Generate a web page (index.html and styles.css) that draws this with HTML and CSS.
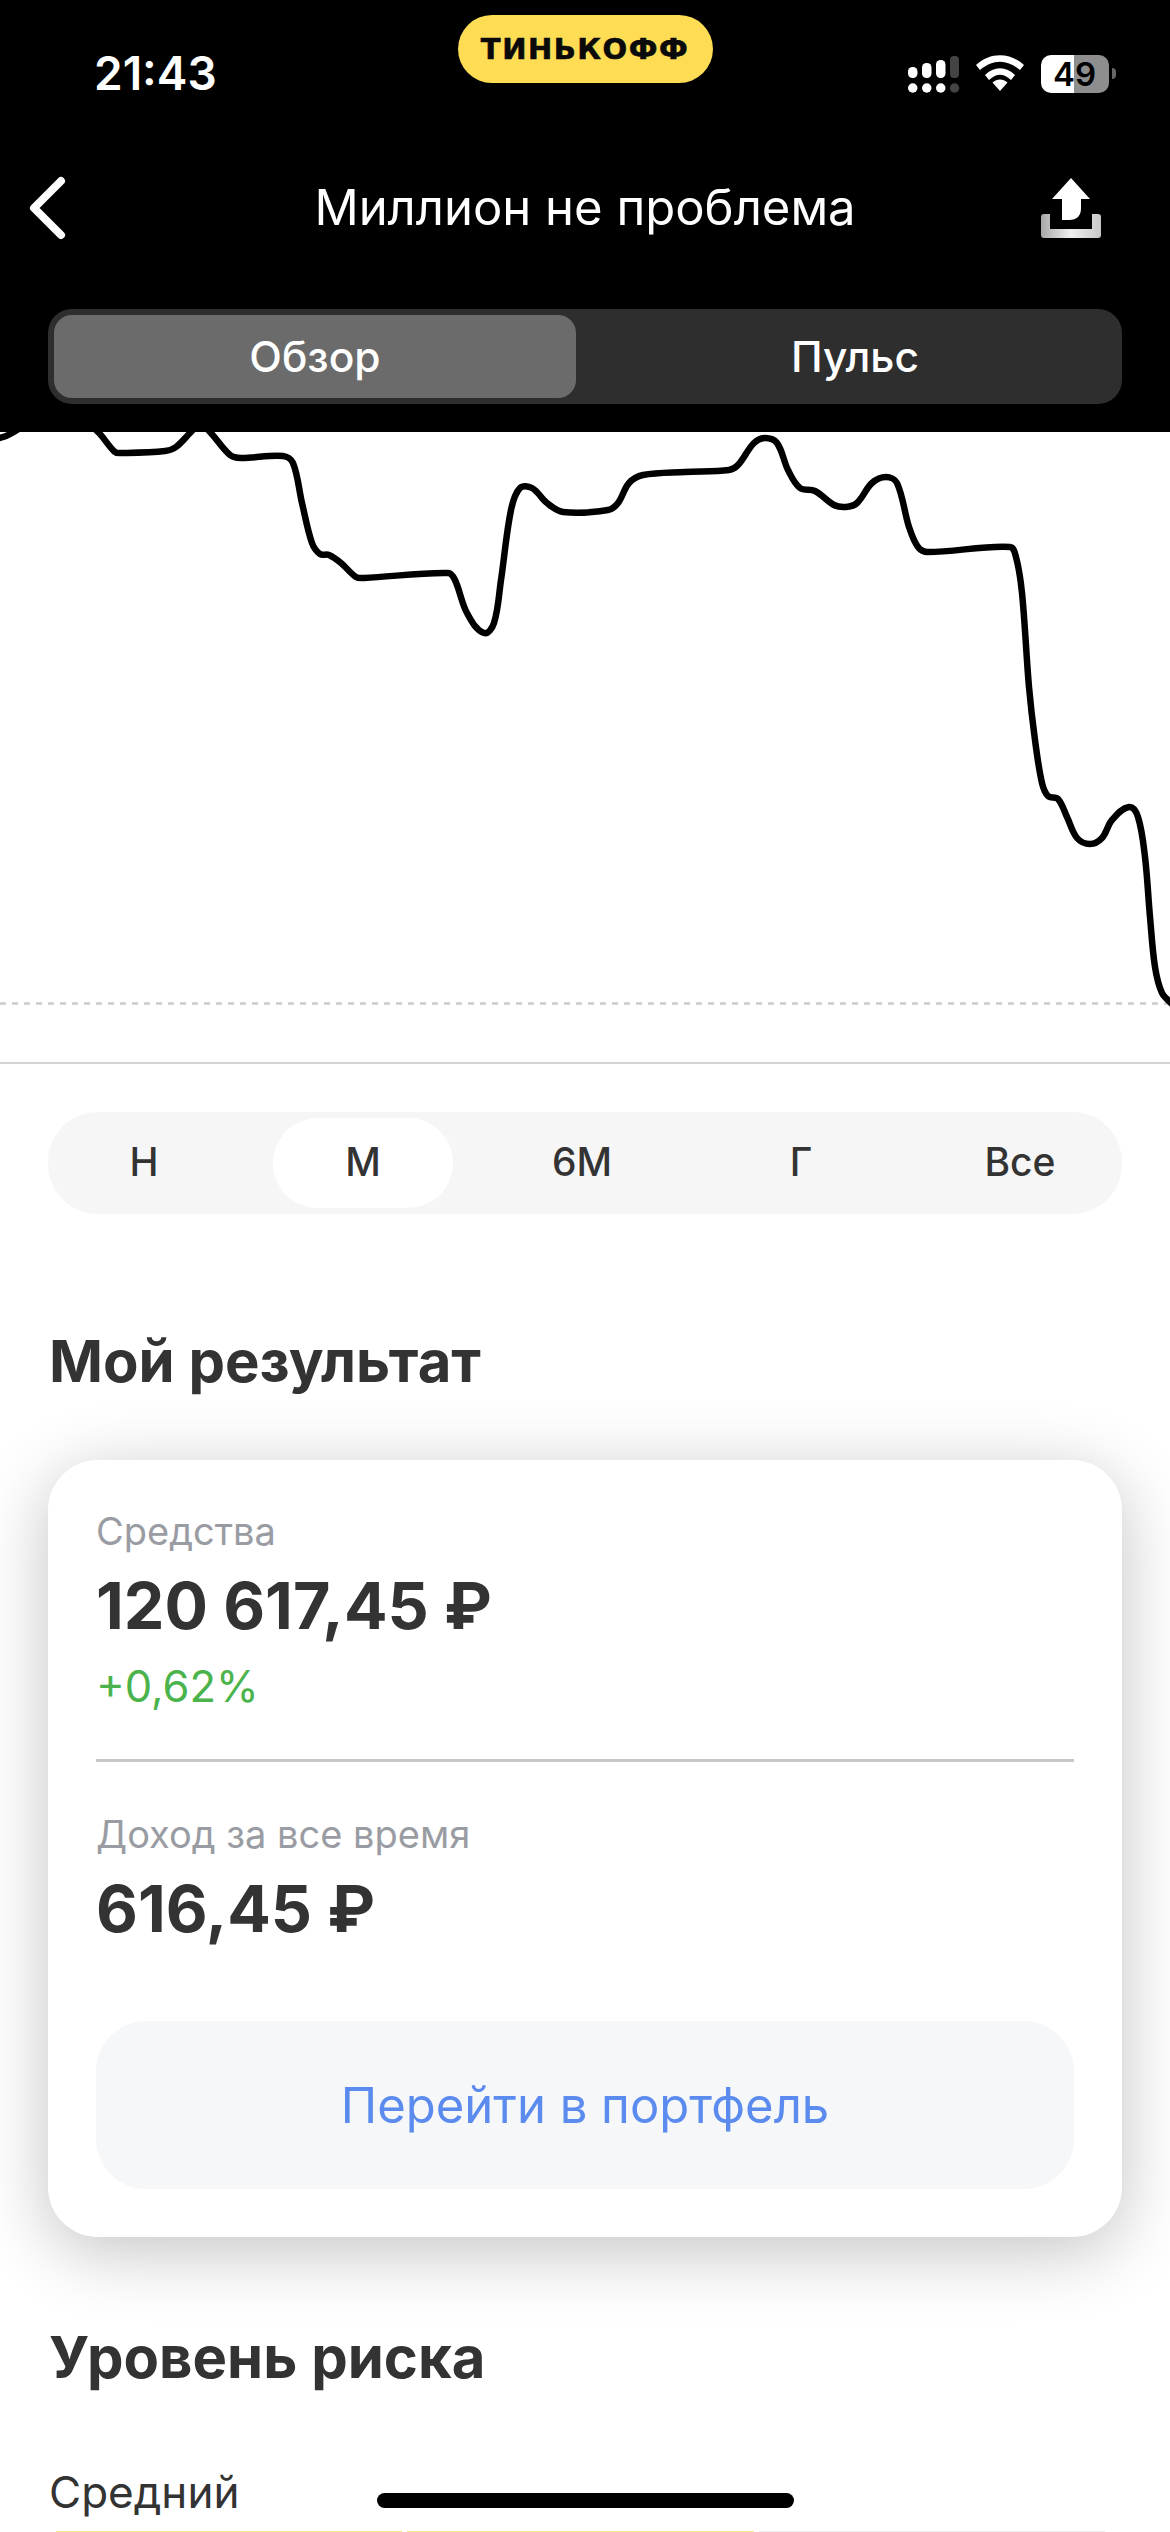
FILE: index.html
```html
<!DOCTYPE html>
<html lang="ru">
<head>
    <meta charset="UTF-8">
    <meta name="viewport" content="width=device-width, initial-scale=1.0">
    <title>Миллион не проблема</title>
    <link rel="stylesheet" href="styles.css">
</head>
<body>
    <div class="screen">
        <header class="top">
            <div class="status">
                <div class="time">21:43</div>
                <div class="brand">ТИНЬКОФФ</div>
                <div class="status-icons">
                    <svg class="signal" width="52" height="38" viewBox="0 0 52 38">
                        <rect x="0" y="11" width="9.5" height="11" rx="4.5" fill="#fff"/>
                        <rect x="14" y="7" width="9.5" height="15" rx="4.5" fill="#fff"/>
                        <rect x="28" y="4" width="9.5" height="18" rx="4.5" fill="#fff"/>
                        <rect x="42" y="0" width="9" height="22" rx="4" fill="#444"/>
                        <circle cx="4.75" cy="32" r="4.75" fill="#fff"/>
                        <circle cx="18.75" cy="32" r="4.75" fill="#fff"/>
                        <circle cx="32.75" cy="32" r="4.75" fill="#fff"/>
                        <circle cx="46.5" cy="32" r="4.75" fill="#444"/>
                    </svg>
                    <svg class="wifi" width="48" height="36" viewBox="0 0 48 36">
                        <path d="M0 10 C14 -3 34 -3 48 10 L44 15 C31 4 17 4 4 15 Z" fill="#fff"/>
                        <path d="M9 20 C18 11 30 11 39 20 L35 25 C27 18 21 18 13 25 Z" fill="#fff"/>
                        <path d="M16.5 27.5 C21 23.5 27 23.5 31.5 27.5 L24 36 Z" fill="#fff"/>
                    </svg>
                    <div class="battery">49</div>
                    <div class="battery-nub"></div>
                </div>
            </div>
            <div class="nav">
                <svg class="back" width="40" height="64" viewBox="0 0 40 64">
                    <path d="M33 5 L6 32 L33 59" fill="none" stroke="#fff" stroke-width="8" stroke-linecap="round" stroke-linejoin="round"/>
                </svg>
                <div class="title">Миллион не проблема</div>
                <svg class="share" width="60" height="60" viewBox="0 0 60 60">
                    <defs>
                        <linearGradient id="trayFill" x1="0" x2="1" y1="0" y2="0">
                            <stop offset="0" stop-color="#a8a8a8"/>
                            <stop offset="0.5" stop-color="#efefef"/>
                            <stop offset="1" stop-color="#c8c8c8"/>
                        </linearGradient>
                    </defs>
                    <path d="M0 39 Q0 36 3 36 H9 V51 H51 V36 H57 Q60 36 60 39 V57 Q60 60 57 60 H3 Q0 60 0 57 Z" fill="url(#trayFill)"/>
                    <path d="M30 0 L49 21 H40 V30 Q40 42 28 42 H21 V21 H11 Z" fill="#fff"/>
                </svg>
            </div>
            <div class="tabs">
                <div class="tab tab-active">Обзор</div>
                <div class="tab tab-other">Пульс</div>
            </div>
        </header>

        <section class="chart">
            <svg width="1170" height="631" viewBox="0 432 1170 631">
                <line class="chart-base" x1="0" y1="1003.5" x2="1170" y2="1003.5"/>
                <path id="chartLine" class="chart-line" d=""/>
            </svg>
        </section>

        <div class="periods">
            <div class="period">Н</div>
            <div class="period period-active">М</div>
            <div class="period">6М</div>
            <div class="period">Г</div>
            <div class="period">Все</div>
        </div>

        <h2 class="heading heading-result">Мой результат</h2>

        <div class="card">
            <div class="label">Средства</div>
            <div class="amount">120 617,45 ₽</div>
            <div class="percent">+0,62%</div>
            <div class="divider"></div>
            <div class="label">Доход за все время</div>
            <div class="amount">616,45 ₽</div>
            <div class="portfolio-btn">Перейти в портфель</div>
        </div>

        <h2 class="heading heading-risk">Уровень риска</h2>
        <div class="risk-name">Средний</div>
        <div class="risk-bars">
            <div class="risk-bar risk-on"></div>
            <div class="risk-bar risk-on"></div>
            <div class="risk-bar"></div>
        </div>

        <div class="home-indicator"></div>
    </div>
    <script src="chart.js"></script>
</body>
</html>
```

FILE: styles.css
```css
html, body {
    margin: 0;
    padding: 0;
    background: #ffffff;
}

.screen {
    position: relative;
    width: 1170px;
    height: 2532px;
    overflow: hidden;
    font-family: 'Inter', 'Noto Sans', sans-serif;
    color: #333333;
}

/* Black header */
.top {
    background: #000000;
    color: #ffffff;
    height: 432px;
    box-sizing: border-box;
}

.status {
    display: grid;
    grid-template-columns: 1fr 255px 1fr;
    height: 150px;
}

.time {
    padding: 50px 0 0 94px;
    font-size: 46px;
    line-height: 46px;
    font-weight: 600;
}

.brand {
    margin-top: 15px;
    height: 68px;
    border-radius: 34px;
    background: #fedd55;
    color: #0a0a0a;
    font-family: 'DejaVu Sans', sans-serif;
    font-weight: 700;
    font-size: 29px;
    line-height: 68px;
    text-align: center;
    letter-spacing: 1.5px;
    -webkit-text-stroke: 0.6px #0a0a0a;
}

.status-icons {
    display: flex;
    align-items: flex-start;
    padding: 55px 0 0 195px;
}

.signal {
    margin-top: 1px;
    margin-right: 16px;
}

.wifi {
    margin-right: 17px;
}

.battery {
    flex: none;
    width: 68px;
    height: 38px;
    border-radius: 10px;
    background: linear-gradient(to right, #ffffff 0, #ffffff 33px, #8e8e8e 33px, #8e8e8e 100%);
    color: #000000;
    font-size: 33px;
    line-height: 38px;
    font-weight: 600;
    text-align: center;
}

.battery-nub {
    flex: none;
    width: 4px;
    height: 11px;
    margin: 13px 0 0 3px;
    border-radius: 0 4px 4px 0;
    background: #666666;
}

.nav {
    display: grid;
    grid-template-columns: 1fr auto 1fr;
    align-items: center;
    height: 116px;
    padding: 0 69px;
    margin-bottom: 43px;
}

.back {
    margin-left: -41px;
}

.share {
    justify-self: end;
}

.title {
    font-size: 49px;
    line-height: 60px;
    font-weight: 400;
}

.tabs {
    display: flex;
    margin: 0 48px;
    height: 95px;
    box-sizing: border-box;
    padding: 6px;
    border-radius: 24px;
    background: #2e2e2e;
}

.tab {
    font-size: 42.5px;
    line-height: 83px;
    font-weight: 500;
    text-align: center;
}

.tab-active {
    width: 522px;
    border-radius: 18px;
    background: #6b6b6b;
}

.tab-other {
    flex: 1;
    padding-left: 18px;
}

/* Chart */
.chart {
    height: 630px;
    border-bottom: 2px solid #d4d4d4;
    overflow: hidden;
}

.chart svg {
    display: block;
}

.chart-line {
    fill: none;
    stroke: #000000;
    stroke-width: 6.5;
    stroke-linecap: round;
    stroke-linejoin: round;
}

.chart-base {
    stroke: #cccccc;
    stroke-width: 2.5;
    stroke-dasharray: 6 6;
}

/* Period switch */
.periods {
    display: flex;
    gap: 39px;
    margin: 48px 48px 0;
    height: 102px;
    box-sizing: border-box;
    padding: 6px;
    border-radius: 50px;
    background: #f6f6f6;
}

.period {
    width: 180px;
    height: 90px;
    border-radius: 45px;
    font-size: 39px;
    line-height: 88px;
    font-weight: 500;
    text-align: center;
}

.period-active {
    background: #ffffff;
}

.heading {
    margin: 0 0 0 49px;
    font-size: 58px;
    line-height: 70px;
    font-weight: 700;
}

.heading-result {
    margin-top: 112px;
}

.heading-risk {
    margin-top: 85px;
}

/* Result card */
.card {
    margin: 64px 48px 0;
    padding: 48px 48px;
    height: 777px;
    box-sizing: border-box;
    border-radius: 50px;
    background: #ffffff;
    box-shadow: 0 14px 70px rgba(0, 0, 0, 0.24);
}

.label {
    font-size: 38px;
    line-height: 46px;
    color: #9a9ca3;
}

.amount {
    margin-top: 14px;
    font-size: 64.5px;
    line-height: 76px;
    font-weight: 700;
}

.percent {
    margin-top: 17px;
    font-size: 43.5px;
    line-height: 50px;
    color: #4bb34b;
}

.divider {
    height: 3px;
    margin: 48px 0 49px;
    background: #c8c8cc;
}

.portfolio-btn {
    margin-top: 74px;
    height: 168px;
    border-radius: 50px;
    background: #f5f7f8;
    color: #5b8bee;
    font-size: 49px;
    line-height: 170px;
    text-align: center;
}

/* Risk */
.risk-name {
    margin: 75px 0 0 49px;
    font-size: 44px;
    line-height: 50px;
}

.risk-bars {
    display: flex;
    gap: 5px;
    margin: 14px 65px 0 56px;
}

.risk-bar {
    flex: 1;
    height: 3px;
    background: #ececec;
}

.risk-on {
    background: #f6e68c;
}

.home-indicator {
    position: absolute;
    left: 377px;
    top: 2493px;
    width: 417px;
    height: 15px;
    border-radius: 8px;
    background: #000000;
}
```

FILE: chart.js
```js
// price points, page coordinates, read off the month view
const points = [
    [-10, 440], [6, 436], [20, 428], [60, 400], [98, 432], [115, 452], [122, 453], [165, 451], [176, 447],
    [191, 432], [200, 424], [210, 432], [230, 455], [241, 458], [283, 456], [293, 463],
    [302, 503], [312, 543], [320, 554], [329, 555], [341, 563], [356, 577], [364, 578],
    [448, 573], [455, 580], [467, 613], [484, 633], [494, 623], [501, 580], [511, 510],
    [520, 488], [532, 488], [547, 503], [563, 512], [608, 510], [618, 503], [629, 483],
    [643, 475], [685, 472], [729, 470], [738, 465], [754, 443], [765, 438], [777, 443],
    [788, 470], [800, 488], [815, 491], [834, 505], [846, 507], [857, 503], [872, 483],
    [886, 477], [897, 483], [909, 527], [918, 547], [928, 552], [1010, 547], [1016, 557],
    [1022, 593], [1029, 687], [1035, 740], [1042, 783], [1048, 796], [1058, 799],
    [1067, 817], [1077, 838], [1090, 844], [1102, 838], [1112, 820], [1129, 807],
    [1138, 817], [1145, 857], [1150, 917], [1155, 967], [1162, 993], [1172, 1004]
];

function dist(a, b) {
    return Math.hypot(b[0] - a[0], b[1] - a[1]);
}

// tangent at point i, weighted by chord length so uneven spacing doesn't kink
function tangent(pts, i) {
    const a = pts[i - 1] || pts[i];
    const b = pts[i + 1] || pts[i];
    const len = dist(a, b) || 1;
    return [(b[0] - a[0]) / len, (b[1] - a[1]) / len];
}

function smoothPath(pts) {
    let d = 'M' + pts[0][0] + ' ' + pts[0][1];
    for (let i = 0; i < pts.length - 1; i++) {
        const p1 = pts[i];
        const p2 = pts[i + 1];
        const h = dist(p1, p2) / 3;
        const t1 = tangent(pts, i);
        const t2 = tangent(pts, i + 1);
        d += ' C' + (p1[0] + t1[0] * h) + ' ' + (p1[1] + t1[1] * h) +
            ' ' + (p2[0] - t2[0] * h) + ' ' + (p2[1] - t2[1] * h) +
            ' ' + p2[0] + ' ' + p2[1];
    }
    return d;
}

document.getElementById('chartLine').setAttribute('d', smoothPath(points));
```
